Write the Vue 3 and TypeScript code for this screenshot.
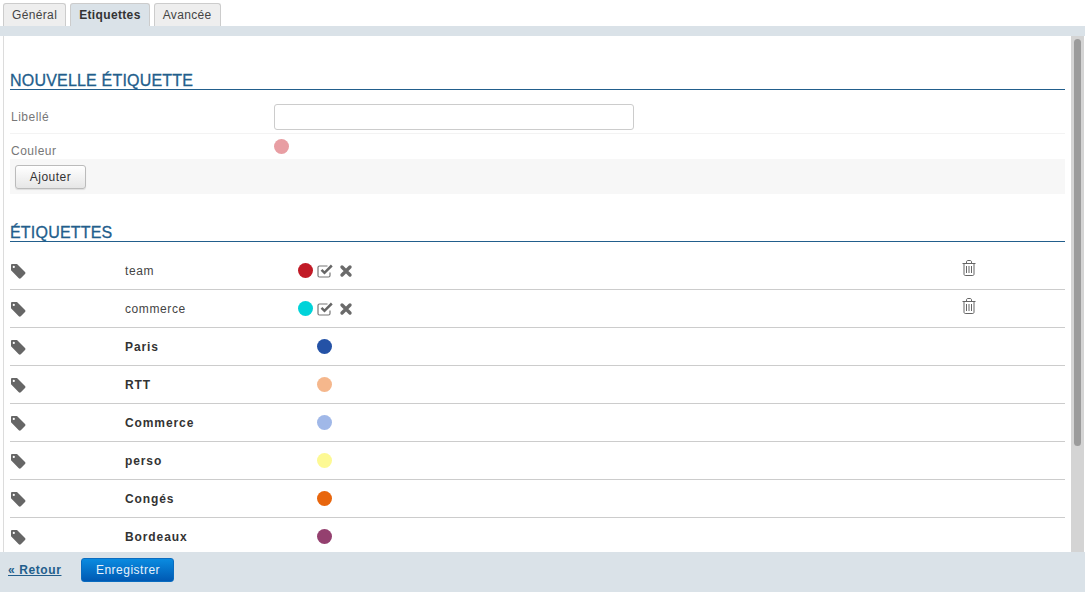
<script setup lang="ts">
interface Label {
  name: string;
  color: string;
  editable?: boolean;
}

const tabs = ["Général", "Etiquettes", "Avancée"];

const labels: Label[] = [
  { name: "team", color: "#c11a26", editable: true },
  { name: "commerce", color: "#00d3d9", editable: true },
  { name: "Paris", color: "#2452a6" },
  { name: "RTT", color: "#f5b78c" },
  { name: "Commerce", color: "#a0b8e8" },
  { name: "perso", color: "#fdf994" },
  { name: "Congés", color: "#e8660d" },
  { name: "Bordeaux", color: "#94406f" },
];
</script>

<template>
  <div class="page">
    <nav class="tabs">
      <a v-for="tab in tabs" :key="tab" class="tab" :class="{ active: tab === 'Etiquettes' }">{{ tab }}</a>
    </nav>
    <div class="band"></div>
    <div class="panel">
      <div class="content">
        <h2 class="title first">NOUVELLE ÉTIQUETTE</h2>
        <div class="field libelle">
          <label>Libellé</label>
          <input type="text" />
        </div>
        <div class="field couleur">
          <label>Couleur</label>
          <span class="dot pink"></span>
        </div>
        <div class="actions">
          <button class="btn">Ajouter</button>
        </div>

        <h2 class="title second">ÉTIQUETTES</h2>
        <div class="list">
          <div v-for="label in labels" :key="label.name" class="row">
            <svg class="tag" width="16" height="16" viewBox="0 0 16 16">
              <path
                fill="#666"
                fill-rule="evenodd"
                d="M1 2.200C1 1.500 1.500 1 2.200 1H7L15 9C15.600 9.600 15.600 10.400 15 11L10.800 15.200C10.200 15.800 9.400 15.800 8.800 15.200L1 7.200ZM3.800 2.800A1.100 1.100 0 1 0 3.800 5A1.100 1.100 0 1 0 3.800 2.800Z"
              />
            </svg>
            <span class="name" :class="{ strong: !label.editable }">{{ label.name }}</span>
            <div class="tools" :class="{ shared: !label.editable }">
              <span class="dot" :style="{ background: label.color }"></span>
              <template v-if="label.editable">
                <svg class="check" width="17" height="16" viewBox="0 0 17 16" fill="none">
                  <path d="M13 9.500V12.500C13 13.500 12.500 14 11.500 14H2.500C1.500 14 1 13.500 1 12.500V4.500C1 3.500 1.500 3 2.500 3H10.500" stroke="#777" stroke-width="1.200" />
                  <path d="M4.500 6.800L7.500 9.800L14.800 2.500" stroke="#666" stroke-width="2.500" />
                </svg>
                <svg class="cross" width="14" height="14" viewBox="0 0 14 14" fill="none">
                  <path d="M3 3L11 11M11 3L3 11" stroke="#6a6a6a" stroke-width="3.400" stroke-linecap="round" />
                </svg>
              </template>
            </div>
            <svg v-if="label.editable" class="trash" width="14" height="16" viewBox="0 0 14 16" fill="none" stroke="#666">
              <path d="M0.500 3.500H13.500M2 3.500V14C2 14.900 2.500 15.500 3.200 15.500H10.800C11.500 15.500 12 14.900 12 14V3.500M4.500 3.500V2C4.500 1 5 0.500 6 0.500H8C9 0.500 9.500 1 9.500 2V3.500M4.500 6V13M7 6V13M9.500 6V13" />
            </svg>
          </div>
        </div>
      </div>
      <div class="scrollbar">
        <div class="thumb"></div>
      </div>
    </div>
    <footer class="footer">
      <a class="back">« Retour</a>
      <button class="save">Enregistrer</button>
    </footer>
  </div>
</template>

<style>
html,
body {
  margin: 0;
  background: #fff;
  overflow: hidden;
}
</style>

<style scoped>
.page {
  width: 1085px;
  height: 592px;
  display: flex;
  flex-direction: column;
  font-family: "Liberation Sans", Arial, sans-serif;
  font-size: 12px;
  letter-spacing: 0.6px;
  color: #333;
  overflow: hidden;
}

.tabs {
  height: 23px;
  margin-top: 3px;
  padding-left: 3px;
  display: flex;
  gap: 4px;
}

.tab {
  box-sizing: border-box;
  height: 23px;
  padding: 4px 8px 0;
  background: #eee;
  border: 1px solid #ccc;
  border-bottom: none;
  border-radius: 3px 3px 0 0;
  color: #444;
  letter-spacing: 0.35px;
}

.tab.active {
  background: #dae2e8;
  color: #333;
  font-weight: bold;
  letter-spacing: 0.35px;
}

.band {
  height: 10px;
  background: #dae2e8;
}

.panel {
  height: 516px;
  margin-left: 3px;
  display: flex;
  background: #fff;
  border-left: 1px solid #dcdcdc;
  overflow: hidden;
}

.content {
  width: 1055px;
  padding: 0 6px;
  overflow: hidden;
}

.scrollbar {
  box-sizing: border-box;
  width: 13px;
  padding: 3px 3px 0;
  background: #d4d4d4;
}

.thumb {
  height: 407px;
  background: #9b9b9b;
  border-radius: 4px;
}

.title {
  margin: 0;
  font-size: 16px;
  line-height: 16px;
  font-weight: normal;
  letter-spacing: 0.2px;
  color: #225e8c;
  border-bottom: 1px solid #225e8c;
  -webkit-text-stroke: 0.3px #225e8c;
}

.title.first {
  margin-top: 37px;
}

.title.second {
  margin-top: 31px;
}

.field {
  display: flex;
  padding-left: 1px;
}

.field label {
  width: 263px;
  color: #777;
  letter-spacing: 0.5px;
}

.libelle {
  height: 44px;
  box-sizing: border-box;
  padding-top: 14px;
  border-bottom: 1px solid #f3f3f3;
  align-items: flex-start;
}

.libelle label {
  padding-top: 6px;
}

.libelle input {
  box-sizing: border-box;
  width: 360px;
  height: 26px;
  margin: 0;
  padding: 0 6px;
  background: #fff;
  border: 1px solid #ccc;
  border-radius: 3px;
  outline: none;
}

.couleur {
  height: 25px;
  box-sizing: border-box;
}

.couleur label {
  padding-top: 10px;
}

.couleur .dot {
  margin-top: 5px;
}

.actions {
  height: 35px;
  box-sizing: border-box;
  padding: 6px 5px;
  background: #f7f7f7;
}

.btn {
  display: block;
  box-sizing: border-box;
  width: 71px;
  height: 24px;
  padding: 0;
  font: inherit;
  letter-spacing: 0.5px;
  color: #333;
  background: linear-gradient(#fff, #e6e6e6);
  border: 1px solid #bbb;
  border-radius: 3px;
  box-shadow: 0 1px 1px rgba(0, 0, 0, 0.1);
}

.list {
  margin-top: 10px;
}

.row {
  position: relative;
  box-sizing: border-box;
  height: 38px;
  display: flex;
  align-items: center;
  border-bottom: 1px solid #ccc;
}

.tag {
  flex: none;
  margin-top: 1px;
}

.name {
  width: 173px;
  margin-left: 99px;
  flex: none;
  color: #444;
}

.name.strong {
  font-weight: bold;
  color: #333;
  letter-spacing: 0.9px;
}

.tools {
  display: flex;
  align-items: center;
  width: 60px;
  flex: none;
}

.tools.shared {
  padding-left: 19px;
}

.dot {
  display: block;
  flex: none;
  width: 15px;
  height: 15px;
  border-radius: 50%;
}

.pink {
  background: #e89ea3;
}

.check {
  margin-left: 4px;
}

.cross {
  margin-left: 5px;
  margin-top: 1px;
}

.trash {
  position: absolute;
  left: 952px;
  top: 8px;
}

.footer {
  flex: 1;
  display: flex;
  align-items: flex-start;
  background: #dae2e8;
  padding: 6px 0 0 8px;
}

.back {
  margin-top: 5px;
  font-weight: bold;
  color: #225e8c;
  text-decoration: underline;
}

.save {
  box-sizing: border-box;
  width: 93px;
  height: 24px;
  margin-left: 20px;
  padding: 0;
  font: inherit;
  letter-spacing: 0.5px;
  color: #e8f2fb;
  background: linear-gradient(#0a8be0, #0059b3);
  border: 1px solid #0a6cc0;
  border-radius: 3px;
}
</style>
